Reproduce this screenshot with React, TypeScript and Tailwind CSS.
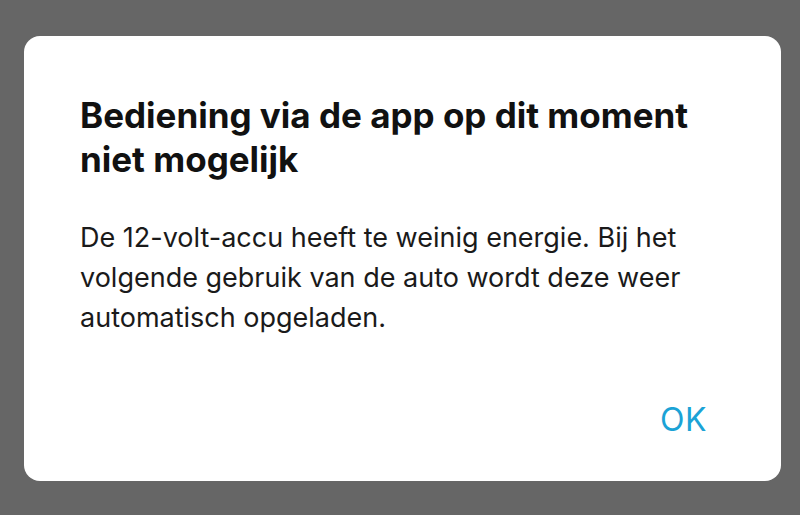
export default function App() {
  return (
    <div className="h-[515px] w-[800px] overflow-hidden bg-[#666666] pl-[24px] pt-[36px]">
      <div
        className="flex h-[445px] w-[757px] flex-col rounded-2xl bg-white pl-[56px] pr-[40px] pt-[57px]"
        style={{ fontFamily: "Inter, 'Noto Sans', sans-serif" }}
      >
        <h1 className="text-[35px] font-bold leading-[44px] text-[#111111]">
          Bediening via de app op dit moment niet mogelijk
        </h1>
        <p className="mt-[37px] text-[27px] leading-[40px] text-[#1a1a1a]">
          De 12-volt-accu heeft te weinig energie. Bij het volgende gebruik van de auto wordt deze weer
          automatisch opgeladen.
        </p>
        <div className="mt-[62px] flex justify-end pr-[34px]">
          <button className="text-[32px] leading-[40px] tracking-[0.5px] text-[#1ba3d6]">OK</button>
        </div>
      </div>
    </div>
  );
}
